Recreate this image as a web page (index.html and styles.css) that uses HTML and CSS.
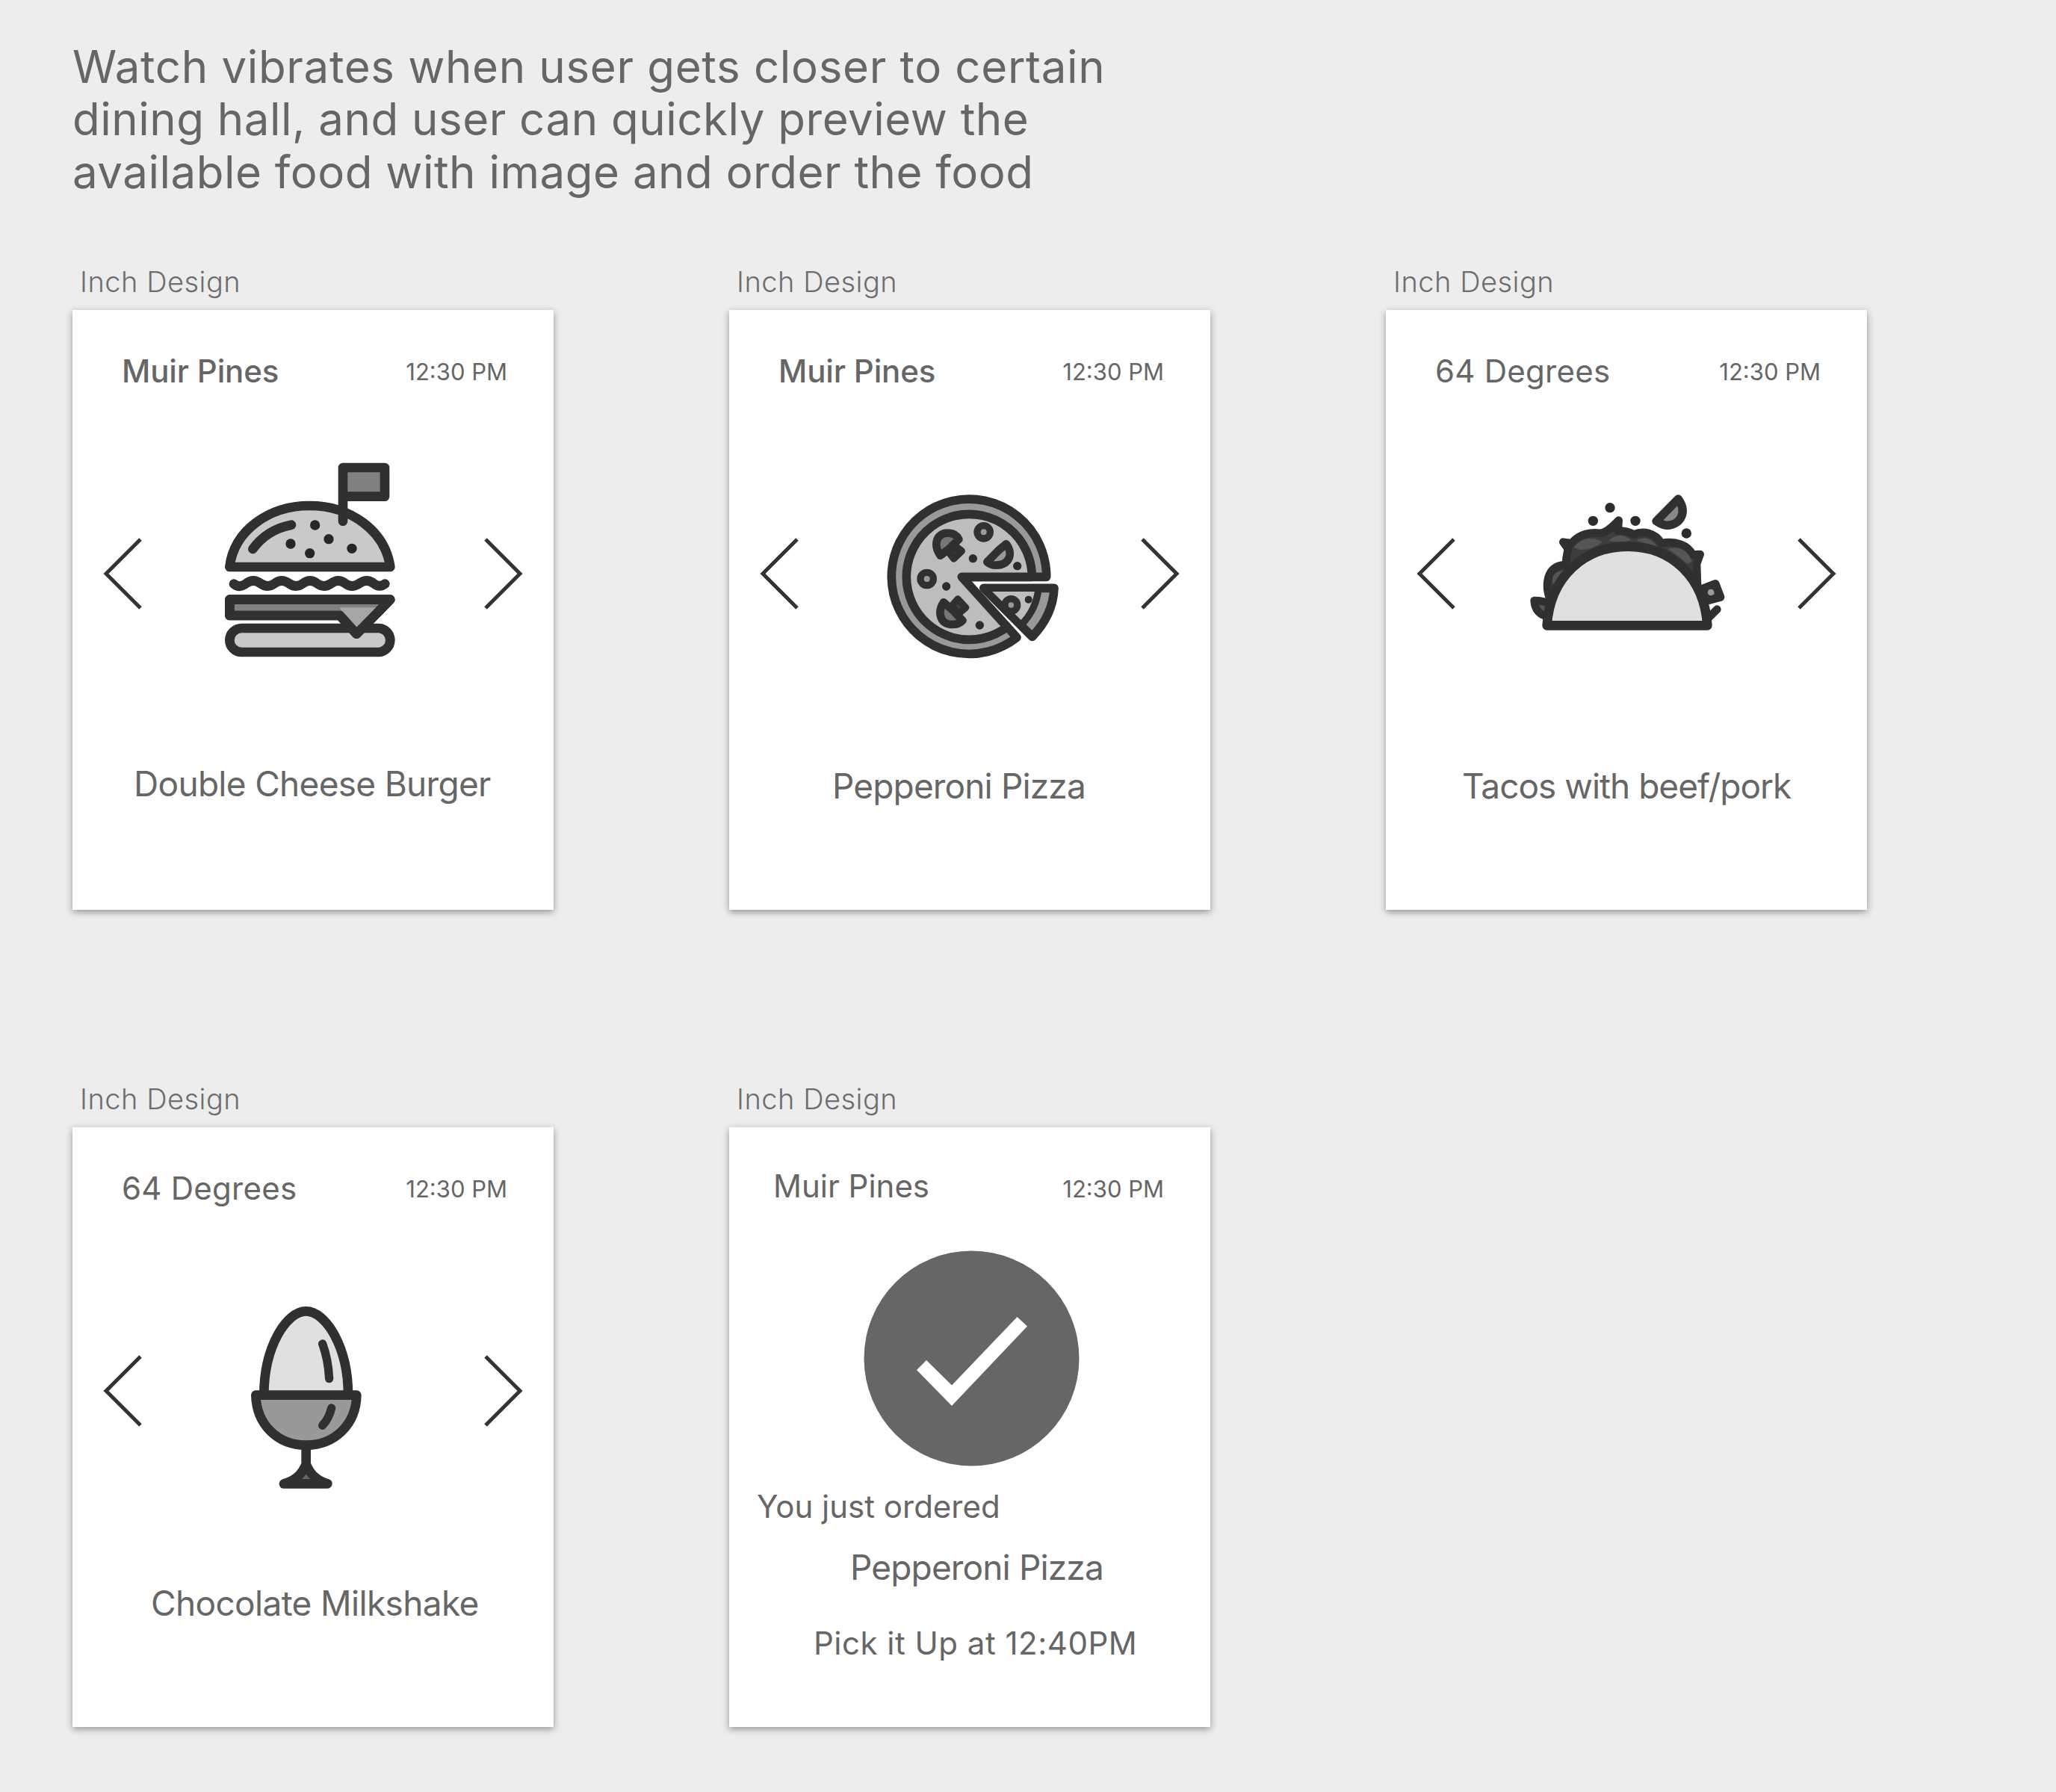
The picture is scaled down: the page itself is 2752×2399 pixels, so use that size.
FILE: index.html
```html
<!DOCTYPE html>
<html lang="en">
<head>
<meta charset="utf-8">
<title>Dining watch preview</title>
<link rel="stylesheet" href="styles.css">
</head>
<body>
<svg class="defs" width="0" height="0" aria-hidden="true">
  <symbol id="prev" viewBox="0 0 56 104"><path d="M51 6 5 52 51 98" fill="none" stroke="#333" stroke-width="5"/></symbol>
  <symbol id="next" viewBox="0 0 56 104"><path d="M5 6 51 52 5 98" fill="none" stroke="#333" stroke-width="5"/></symbol>
</svg>
<p class="intro"><span class="lead">Watch vibrates when user gets closer to certain</span><br>dining hall, and user can quickly preview the<br>available food with image and order the food</p>
<main class="board">
  <section class="artboard">
    <h2 class="label">Inch Design</h2>
    <article class="card">
      <header class="bar"><span class="place strong">Muir Pines</span><time class="time">12:30 PM</time></header>
      <div class="stage">
        <svg class="arrow"><use href="#prev"/></svg>
        <svg class="art" viewBox="-63 24 960 960">
          <g class="ink">
            <path class="light" d="M82 477C100 330 240 231 403 231S706 330 727 477Z"/>
            <path d="M175 405C215 350 265 320 330 308" fill="none"/>
            <path class="mid" d="M537 293V78H705V194H537"/>
            <path d="M99 545Q121 564 149 543T206 543T263 543T320 543T377 543T433 543T490 543T546 543T603 543T660 543Q685 562 706 545" fill="none"/>
            <rect class="light" x="82" y="723" width="645" height="96" rx="48"/>
            <path class="mid" d="M82 608H727L592 746 525 672H82Z"/>
            <path d="M522 640H690L592 722Z" fill="#a6a6a6" stroke="none"/>
            <path d="M82 608H727L592 746 525 672H82Z" fill="none"/>
          </g>
          <g fill="#262626"><circle cx="425" cy="309" r="20"/><circle cx="327" cy="384" r="20"/><circle cx="480" cy="365" r="20"/><circle cx="404" cy="422" r="20"/><circle cx="573" cy="403" r="20"/></g>
        </svg>
        <svg class="arrow"><use href="#next"/></svg>
      </div>
      <p class="dish burger">Double Cheese Burger</p>
    </article>
  </section>

  <section class="artboard">
    <h2 class="label">Inch Design</h2>
    <article class="card">
      <header class="bar"><span class="place strong">Muir Pines</span><time class="time">12:30 PM</time></header>
      <div class="stage">
        <svg class="arrow"><use href="#prev"/></svg>
        <svg class="art" viewBox="-96 -96 960 960">
          <g class="ink thin">
            <path fill="#999" d="M692 397A311 311 0 1 0 573 640L352 397Z"/>
            <path fill="#bdbdbd" d="M634 397A252 252 0 1 0 534 598L352 397Z"/>
            <path fill="#999" d="M440 442H723C720 520 690 580 635 637Z"/>
            <path fill="#bdbdbd" stroke-width="28" d="M440 442H660C655 500 630 550 590 590Z"/>
            <g stroke-width="28">
              <circle cx="440" cy="217" r="26" fill="#999"/>
              <circle cx="212" cy="405" r="26" fill="#999"/>
              <circle cx="550" cy="510" r="25" fill="#999"/>
              <path fill="#999" stroke-width="32" d="M530 265C560 300 545 350 490 350 475 350 465 346 454 337L500 290Z"/>
              <path fill="#777" stroke-width="32" d="M266 311C235 265 252 221 295 221 319 221 333 231 340 246L300 285Z"/>
              <path fill="#444" d="M300 298 328 274 352 293 320 324Z"/>
              <path fill="#777" stroke-width="32" d="M279 499C252 540 267 588 310 588 335 588 348 581 355 572L315 530Z"/>
              <path fill="#444" d="M312 513 336 486 368 520 338 545Z"/>
            </g>
          </g>
          <g class="dots"><circle cx="397" cy="323" r="17"/><circle cx="575" cy="353" r="17"/><circle cx="290" cy="435" r="17"/><circle cx="424" cy="591" r="17"/><circle cx="620" cy="488" r="15"/></g>
        </svg>
        <svg class="arrow"><use href="#next"/></svg>
      </div>
      <p class="dish pizza">Pepperoni Pizza</p>
    </article>
  </section>

  <section class="artboard">
    <h2 class="label">Inch Design</h2>
    <article class="card">
      <header class="bar"><span class="place wide">64 Degrees</span><time class="time">12:30 PM</time></header>
      <div class="stage">
        <svg class="arrow"><use href="#prev"/></svg>
        <svg class="art" viewBox="-38 -96 960 960">
          <g class="ink">
            <path fill="#555" stroke-width="32" d="M72 492C74 530 95 552 130 556L145 508Q110 492 72 492Z"/>
            <path fill="#3d3d3d" stroke-width="32" d="M140 500C110 430 120 350 200 348 198 320 205 300 208 285L188 257 222 262C250 225 300 215 340 222 370 215 390 190 411 170L408 212Q445 212 472 226C510 210 560 220 582 262 640 250 690 270 708 308L738 306 724 345 728 460Z"/>
            <path fill="#777" stroke-width="34" d="M750 444 799 425 819 478 774 490Z"/>
            <path d="M765 568 806 527" fill="none" stroke-width="32"/>
            <path fill="#888" stroke-width="34" d="M650 84C690 140 655 190 605 190 588 190 575 182 562 173Z"/>
          </g>
          <g fill="#555">
            <path d="M230 278C260 235 320 235 345 258Q300 290 255 288Z"/><path d="M370 252Q415 210 462 250 420 260 370 252Z"/><path d="M480 250Q530 225 565 275Q520 262 480 250Z"/><path d="M608 285Q680 265 705 335L685 345Q650 310 608 285Z"/><path d="M145 420Q140 375 190 372L155 430Z"/>
          </g>
          <circle cx="781" cy="459" r="13" fill="#999"/>
          <path class="ink" fill="#e0e0e0" d="M123 592C135 400 270 275 447 275S755 400 767 592Z"/>
          <g class="dots"><circle cx="308" cy="172" r="20"/><circle cx="376" cy="119" r="20"/><circle cx="478" cy="172" r="20"/><circle cx="683" cy="222" r="20"/></g>
        </svg>
        <svg class="arrow"><use href="#next"/></svg>
      </div>
      <p class="dish taco">Tacos with beef/pork</p>
    </article>
  </section>

  <section class="artboard">
    <h2 class="label">Inch Design</h2>
    <article class="card">
      <header class="bar"><span class="place wide">64 Degrees</span><time class="time">12:30 PM</time></header>
      <div class="stage">
        <svg class="arrow"><use href="#prev"/></svg>
        <svg class="art" viewBox="-183 -84 960 960">
          <g class="ink">
            <path fill="#e0e0e0" d="M100 412C100 220 190 76 269 76S438 220 438 412"/>
            <path fill="#999" d="M67 413H472C470 530 385 614 269 614S70 530 67 413Z"/>
            <path d="M335 207Q358 270 362 347M371 465Q362 505 335 535" fill="none" stroke-width="34"/>
            <path fill="#666" d="M269 620V690C250 738 220 757 180 769H355C318 757 288 738 269 690"/>
          </g>
        </svg>
        <svg class="arrow"><use href="#next"/></svg>
      </div>
      <p class="dish shake">Chocolate Milkshake</p>
    </article>
  </section>

  <section class="artboard">
    <h2 class="label">Inch Design</h2>
    <article class="card">
      <header class="bar raised"><span class="place">Muir Pines</span><time class="time">12:30 PM</time></header>
      <svg class="done" viewBox="0 0 290 290"><circle cx="145.500" cy="145.500" r="144" fill="#666"/><path d="M72 161 85 148 119 181.500 206.500 90 220 102.500 119 209Z" fill="#fff"/></svg>
      <p class="note ordered">You just ordered</p>
      <p class="dish confirmed">Pepperoni Pizza</p>
      <p class="note pickup">Pick it Up at 12:40PM</p>
    </article>
  </section>
</main>
</body>
</html>
```
FILE: styles.css
```css
* { box-sizing: border-box; margin: 0; padding: 0; }

body {
  background: #ededed;
  color: #666;
  font-family: Inter, "Liberation Sans", sans-serif;
  padding: 54px 0 80px 97px;
}

.defs { display: block; }

.intro {
  height: 212px;
  font-size: 60px;
  line-height: 70.3px;
  letter-spacing: 0.5px;
}
.lead { letter-spacing: 0.66px; }

.board {
  display: grid;
  grid-template-columns: repeat(3, 644px);
  column-gap: 235px;
  row-gap: 230px;
  padding-top: 88px;
}

.label {
  height: 61px;
  padding-left: 10px;
  font-size: 38px;
  font-weight: 300;
  line-height: 46px;
  letter-spacing: 0.5px;
  color: #6e6e6e;
}

.card {
  display: flex;
  flex-direction: column;
  height: 803px;
  background: #fff;
  box-shadow: 0 3px 9px rgba(0, 0, 0, 0.38);
}

.bar {
  display: flex;
  justify-content: space-between;
  height: 193px;
  padding: 57px 62px 0 66px;
}

.place { font-size: 42px; line-height: 50px; }
.strong { font-weight: 500; letter-spacing: -0.15px; }
.wide { letter-spacing: 0.25px; }
.time { padding-top: 6px; font-size: 31px; line-height: 40px; }

.raised { height: 164px; padding: 54px 62px 0 59px; }
.raised .time { padding-top: 9px; }

.stage {
  display: flex;
  align-items: center;
  justify-content: space-between;
  height: 320px;
  padding: 0 40px;
}

.arrow { width: 56px; height: 104px; }
.art { width: 320px; height: 320px; }

.ink { stroke: #303030; stroke-width: 38px; stroke-linecap: round; stroke-linejoin: round; }
.thin { stroke-width: 35px; }
.light { fill: #c9c9c9; }
.mid { fill: #808080; }
.dots { fill: #2c2c2c; }

.dish { margin-top: 96px; font-size: 46px; line-height: 56px; white-space: nowrap; }
.burger { margin-top: 93px; padding-left: 82px; letter-spacing: -0.7px; }
.pizza { padding-left: 138px; letter-spacing: -0.85px; }
.taco { padding-left: 102px; letter-spacing: -1px; }
.shake { padding-left: 105px; letter-spacing: -0.65px; }

.done { flex: none; width: 290px; height: 290px; margin-left: 179px; }
.note { font-size: 42px; line-height: 50px; white-space: nowrap; }
.ordered { margin-top: 29px; padding-left: 37px; }
.confirmed { margin-top: 28px; padding-left: 162px; letter-spacing: -0.85px; }
.pickup { margin-top: 49px; padding-left: 113px; letter-spacing: 0.5px; }
```
